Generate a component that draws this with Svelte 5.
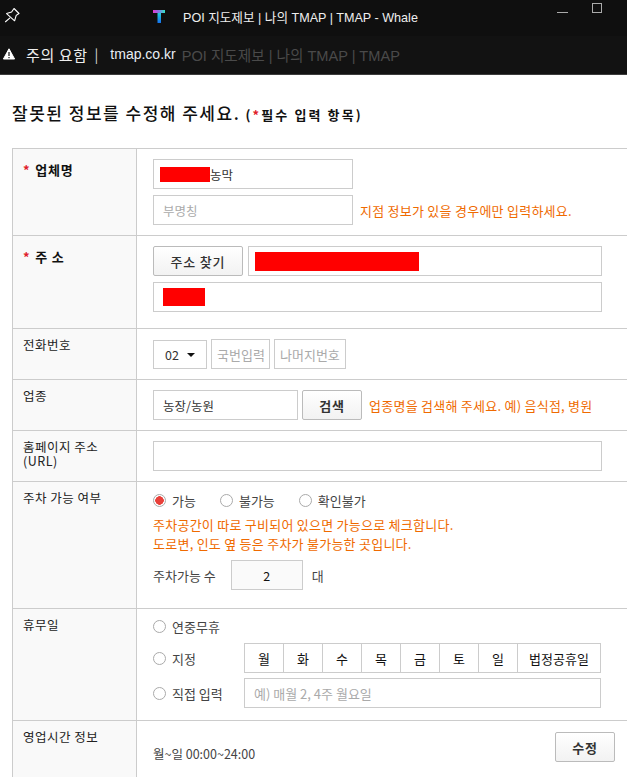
<script>
  const days = ['월', '화', '수', '목', '금', '토', '일', '법정공휴일'];
</script>

<div class="page">
  <header class="chrome">
    <div class="titlebar">
      <svg class="pin" viewBox="0 0 16 16" width="16" height="16" fill="none" stroke="#fff" stroke-width="1.1" stroke-linejoin="round">
        <path d="M10 1.5 15 6.5 12.2 8.4 10.6 13.8 2.6 6.6 7.6 5zM6 10.8 1.2 15" />
      </svg>
      <svg class="logo" viewBox="0 0 12 13" width="12" height="13">
        <defs>
          <linearGradient id="lg" x1="0" y1="0" x2="1" y2="0">
            <stop offset="0" stop-color="#e83ad0" />
            <stop offset="0.45" stop-color="#8a70e8" />
            <stop offset="1" stop-color="#2ee6c4" />
          </linearGradient>
          <linearGradient id="lg2" x1="0" y1="0" x2="0" y2="1">
            <stop offset="0" stop-color="#22d0d8" />
            <stop offset="1" stop-color="#1670f0" />
          </linearGradient>
        </defs>
        <rect x="0" y="0" width="12" height="3" fill="url(#lg)" />
        <rect x="4.5" y="3" width="3.5" height="10" fill="url(#lg2)" />
      </svg>
      <span class="wintitle">POI 지도제보 | 나의 TMAP | TMAP - Whale</span>
      <span class="minimize"></span>
      <span class="maximize"></span>
    </div>
    <div class="addressbar">
      <svg viewBox="0 0 12 12" width="12" height="12"><path d="M6 .8 11.6 11H.4z" fill="#fff" stroke="#fff" stroke-linejoin="round" /><rect x="5.4" y="4" width="1.2" height="4" fill="#111" /><rect x="5.4" y="9" width="1.2" height="1.2" fill="#111" /></svg>
      <span class="warn">주의 요함</span>
      <span class="sep">|</span>
      <span class="host">tmap.co.kr</span>
      <span class="ptitle">POI 지도제보 | 나의 TMAP | TMAP</span>
    </div>
  </header>

  <main class="content">
    <h1>잘못된 정보를 수정해 주세요. <small>(<em>*</em>필수 입력 항목)</small></h1>

    <div class="form">
      <div class="row r1">
        <div class="label strong"><em>*</em> 업체명</div>
        <div class="cell">
          <div class="line">
            <div class="input w200 valued"><span class="red" style="width:50px"></span>농막</div>
          </div>
          <div class="line">
            <div class="input w200 ph">부명칭</div>
            <span class="hint">지점 정보가 있을 경우에만 입력하세요.</span>
          </div>
        </div>
      </div>

      <div class="row r2">
        <div class="label strong"><em>*</em> 주 소</div>
        <div class="cell">
          <div class="line tight">
            <button class="btn addr">주소 찾기</button>
            <div class="input grow"><span class="red inset" style="width:164px"></span></div>
          </div>
          <div class="line">
            <div class="input grow"><span class="red inset2" style="width:42px"></span></div>
          </div>
        </div>
      </div>

      <div class="row r3">
        <div class="label">전화번호</div>
        <div class="cell">
          <div class="line tight">
            <div class="input sel">02<i class="caret"></i></div>
            <div class="input ph small">국번입력</div>
            <div class="input ph small">나머지번호</div>
          </div>
        </div>
      </div>

      <div class="row r4">
        <div class="label">업종</div>
        <div class="cell">
          <div class="line">
            <div class="input w145 valued">농장/농원</div>
            <button class="btn search">검색</button>
            <span class="hint">업종명을 검색해 주세요. 예) 음식점, 병원</span>
          </div>
        </div>
      </div>

      <div class="row r5">
        <div class="label">홈페이지 주소<br />(URL)</div>
        <div class="cell">
          <div class="line"><div class="input grow"></div></div>
        </div>
      </div>

      <div class="row r6">
        <div class="label">주차 가능 여부</div>
        <div class="cell">
          <div class="radios">
            <span class="radio on"></span><span class="rl">가능</span>
            <span class="radio"></span><span class="rl">불가능</span>
            <span class="radio"></span><span class="rl">확인불가</span>
          </div>
          <p class="hint para">주차공간이 따로 구비되어 있으면 가능으로 체크합니다.<br />도로변, 인도 옆 등은 주차가 불가능한 곳입니다.</p>
          <div class="count">
            <span>주차가능 수</span>
            <div class="input num">2</div>
            <span>대</span>
          </div>
        </div>
      </div>

      <div class="row r7">
        <div class="label">휴무일</div>
        <div class="cell">
          <div class="hrow first"><span class="radio"></span><span class="rl">연중무휴</span></div>
          <div class="hrow">
            <span class="hl"><span class="radio"></span><span class="rl">지정</span></span>
            <div class="days">
              {#each days as d}<span class="day">{d}</span>{/each}
            </div>
          </div>
          <div class="hrow">
            <span class="hl"><span class="radio"></span><span class="rl">직접 입력</span></span>
            <div class="input direct ph">예) 매월 2, 4주 월요일</div>
          </div>
        </div>
      </div>

      <div class="row r8">
        <div class="label">영업시간 정보</div>
        <div class="cell hours">
          <span>월~일 00:00~24:00</span>
          <button class="btn edit">수정</button>
        </div>
      </div>
    </div>
  </main>
</div>

<style>
  :global(body) {
    margin: 0;
    background: #fff;
    overflow: hidden;
  }
  .page {
    width: 627px;
    height: 777px;
    overflow: hidden;
    font-family: "Noto Sans CJK KR", "Noto Sans", sans-serif;
    font-size: 13px;
    color: #333;
  }
  .chrome {
    height: 75px;
    box-sizing: border-box;
    background: #121212;
    color: #fff;
    border-bottom: 1px solid #3c3c3c;
  }
  .titlebar {
    position: relative;
    height: 36px;
    background: #0f0f0f;
    display: flex;
    align-items: center;
    padding-left: 153px;
    box-sizing: border-box;
  }
  .pin {
    position: absolute;
    left: 4px;
    top: 7px;
  }
  .logo {
    margin-top: -4px;
  }
  .wintitle {
    margin-left: 18px;
    margin-top: -4px;
    font-family: "Liberation Sans", "Noto Sans CJK KR", sans-serif;
    font-size: 12.6px;
    color: #eee;
    white-space: nowrap;
  }
  .minimize {
    position: absolute;
    left: 557px;
    top: 12px;
    width: 11px;
    height: 1px;
    background: #aaa;
  }
  .maximize {
    position: absolute;
    left: 592px;
    top: 3px;
    width: 8px;
    height: 8px;
    border: 1px solid #aaa;
  }
  .addressbar {
    height: 38px;
    display: flex;
    align-items: center;
    padding: 0 0 2px 3px;
    font-size: 14px;
    box-sizing: border-box;
    white-space: nowrap;
  }
  .warn {
    margin-left: 11px;
    font-size: 15px;
    letter-spacing: 0.6px;
    color: #eee;
  }
  .sep {
    margin-left: 7px;
    color: #ddd;
  }
  .host {
    margin-left: 12px;
    font-family: "Liberation Sans", sans-serif;
    font-size: 14px;
    color: #e8eef5;
  }
  .ptitle {
    margin-left: 6px;
    font-family: "Liberation Sans", "Noto Sans CJK KR", sans-serif;
    font-size: 14.6px;
    color: #4a4a4a;
  }
  .content {
    padding: 0 0 0 12px;
  }
  h1 {
    margin: 0;
    padding-top: 27px;
    height: 46px;
    box-sizing: content-box;
    font-size: 17px;
    line-height: 22px;
    font-weight: 500;
    color: #111;
    letter-spacing: 1.5px;
    white-space: nowrap;
  }
  h1 small {
    font-size: 13px;
    font-weight: 700;
    letter-spacing: 2.1px;
  }
  em {
    color: #e0202a;
    font-style: normal;
    font-weight: 700;
  }
  .form {
    border-top: 1px solid #ccc;
    border-left: 1px solid #ccc;
    width: 615px;
  }
  .row {
    display: grid;
    grid-template-columns: 124px 1fr;
    border-bottom: 1px solid #ccc;
    box-sizing: border-box;
  }
  .r1 { height: 87px; }
  .r2 { height: 93px; }
  .r3 { height: 51px; }
  .r4 { height: 51px; }
  .r5 { height: 51px; }
  .r6 { height: 127px; }
  .r7 { height: 112px; }
  .r8 { height: 70px; border-bottom: 0; }
  .label {
    background: #f9f9f9;
    border-right: 1px solid #ccc;
    padding: 9px 0 0 10px;
    line-height: 14px;
    color: #222;
    font-size: 12.5px;
    letter-spacing: 0.5px;
  }
  .label.strong {
    padding-top: 13px;
    line-height: 15px;
    color: #111;
    font-weight: 700;
    font-size: 13px;
    letter-spacing: 0.8px;
  }
  .label.strong em {
    margin-right: 1px;
  }
  .cell {
    padding: 10px 0 0 16px;
    display: flex;
    flex-direction: column;
    gap: 6px;
    min-width: 0;
  }
  .line {
    display: flex;
    align-items: center;
    gap: 7px;
    padding-right: 26px;
  }
  .line.tight {
    gap: 5px;
  }
  .input {
    box-sizing: border-box;
    height: 30px;
    border: 1px solid #ccc;
    background: #fff;
    display: flex;
    align-items: center;
    padding-left: 9px;
    color: #333;
    flex: none;
    font-size: 12.5px;
  }
  .w200 { width: 200px; }
  .w145 { width: 145px; }
  .grow { flex: 1; }
  .ph { color: #aaa; }
  .red {
    display: inline-block;
    height: 15px;
    background: #f00;
    margin-left: -3px;
  }
  .inset {
    height: 19px;
    margin-left: -3px;
  }
  .inset2 {
    height: 18px;
    margin-left: 0;
  }
  .hint {
    color: #ef6a00;
    font-size: 13px;
    letter-spacing: 0.25px;
    white-space: nowrap;
  }
  .btn {
    box-sizing: border-box;
    height: 30px;
    border: 1px solid #bbb;
    border-radius: 2px;
    background: linear-gradient(#fff, #f2f2f2);
    font-family: inherit;
    font-size: 13px;
    font-weight: 500;
    color: #333;
    padding: 0;
    flex: none;
    letter-spacing: 0.8px;
  }
  .addr { width: 90px; }
  .search { width: 60px; font-weight: 700; margin-left: -3px; }
  .sel {
    width: 54px;
    position: relative;
    padding-left: 11px;
    height: 29px;
  }
  .caret {
    position: absolute;
    right: 11px;
    top: 12px;
    border-left: 4px solid transparent;
    border-right: 4px solid transparent;
    border-top: 4px solid #111;
  }
  .small {
    padding: 0 0 0 5px;
    font-size: 13px;
    white-space: nowrap;
  }
  .small:nth-child(2) { width: 59px; margin-left: -1px; }
  .small:nth-child(3) { width: 72px; margin-left: -1px; }
  .radios {
    display: flex;
    align-items: center;
    height: 18px;
    margin-top: -1px;
  }
  .radio {
    box-sizing: border-box;
    width: 13px;
    height: 13px;
    border: 1px solid #aaa;
    border-radius: 50%;
    background: #fff;
    display: inline-block;
    flex: none;
  }
  .radio.on {
    background: radial-gradient(circle, #e8403a 0 4px, #fff 4.5px);
  }
  .rl {
    margin-left: 6px;
    font-size: 13px;
    color: #444;
    white-space: nowrap;
  }
  .radios .rl { margin-right: 24px; }
  .para {
    margin: 0;
    line-height: 19px;
  }
  .count {
    display: flex;
    align-items: center;
    margin-top: 1px;
    color: #444;
  }
  .num {
    width: 72px;
    margin: 0 9px 0 15px;
    justify-content: center;
    padding: 0;
    background: #fafafa;
    color: #111;
  }
  .r7 .cell { padding-top: 8px; gap: 5px; }
  .hrow {
    display: flex;
    align-items: center;
    height: 30px;
  }
  .hrow.first { height: 18px; margin-bottom: 3px; }
  .hl {
    display: flex;
    align-items: center;
    width: 91px;
    flex: none;
  }
  .days {
    display: flex;
    height: 30px;
    width: 357px;
    box-sizing: border-box;
    border: 1px solid #ccc;
  }
  .day {
    width: 39px;
    box-sizing: border-box;
    border-right: 1px solid #ccc;
    display: flex;
    align-items: center;
    justify-content: center;
    color: #111;
    flex: none;
  }
  .day:last-child {
    border-right: 0;
    flex: 1;
  }
  .direct {
    width: 357px;
    font-size: 13px;
  }
  .hours {
    flex-direction: row;
    align-items: center;
    justify-content: space-between;
    padding: 0 13px 0 16px;
    height: 64px;
    color: #444;
    font-size: 12.5px;
  }
  .edit {
    width: 60px;
    margin-top: -12px;
    font-weight: 700;
  }
</style>
